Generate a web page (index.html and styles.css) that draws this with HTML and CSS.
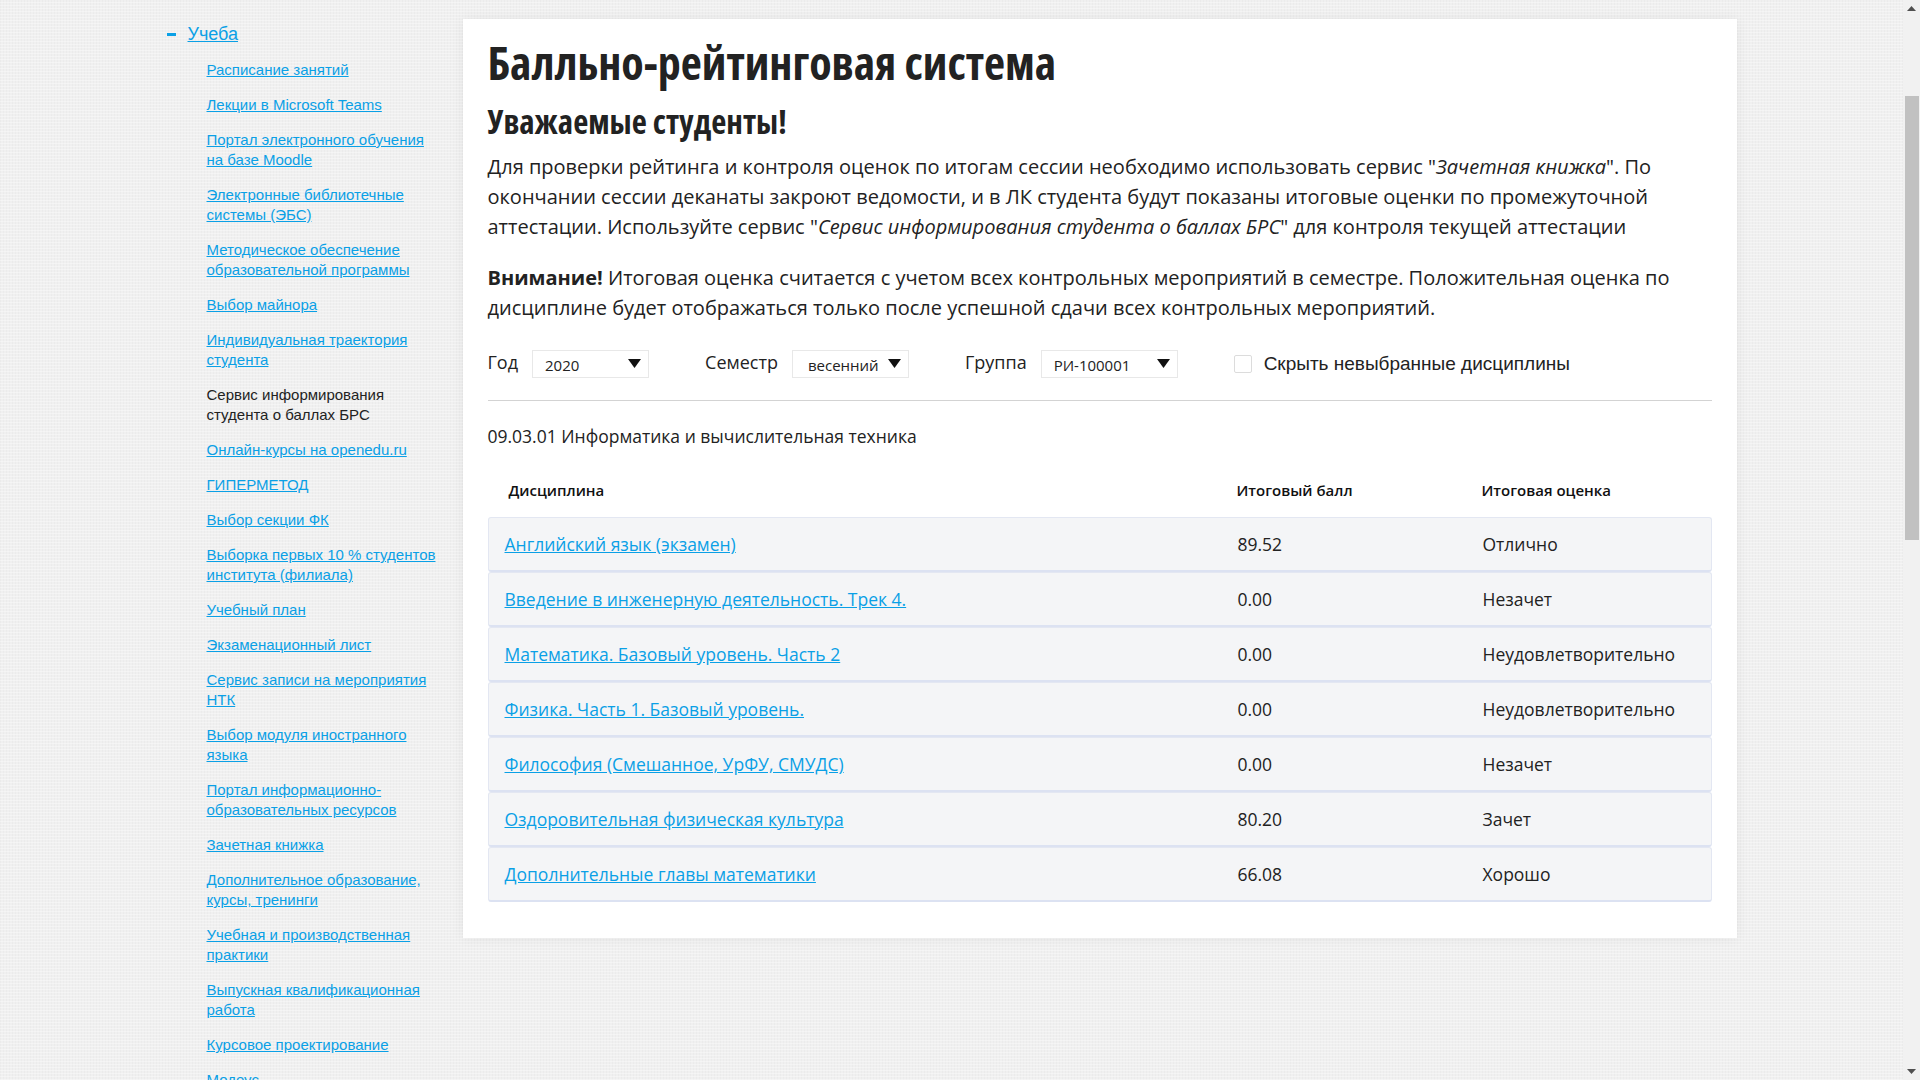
FILE: index.html
```html
<!DOCTYPE html>
<html lang="ru">
<head>
<meta charset="utf-8">
<title>Балльно-рейтинговая система</title>
<link rel="stylesheet" href="styles.css">
</head>
<body>
<div class="page">
  <div class="container">
    <aside class="sidebar">
      <div class="section">
        <span class="toggle"></span>
        <a href="#" class="section-link">Учеба</a>
      </div>
      <ul class="submenu">
        <li><a href="#">Расписание занятий</a></li>
        <li><a href="#">Лекции в Microsoft Teams</a></li>
        <li><a href="#">Портал электронного обучения на базе Moodle</a></li>
        <li><a href="#">Электронные библиотечные системы (ЭБС)</a></li>
        <li><a href="#">Методическое обеспечение образовательной программы</a></li>
        <li><a href="#">Выбор майнора</a></li>
        <li><a href="#">Индивидуальная траектория студента</a></li>
        <li><span class="current">Сервис информирования студента о баллах БРС</span></li>
        <li><a href="#">Онлайн-курсы на openedu.ru</a></li>
        <li><a href="#">ГИПЕРМЕТОД</a></li>
        <li><a href="#">Выбор секции ФК</a></li>
        <li><a href="#">Выборка первых 10 % студентов института (филиала)</a></li>
        <li><a href="#">Учебный план</a></li>
        <li><a href="#">Экзаменационный лист</a></li>
        <li><a href="#">Сервис записи на мероприятия НТК</a></li>
        <li><a href="#">Выбор модуля иностранного языка</a></li>
        <li><a href="#">Портал информационно-образовательных ресурсов</a></li>
        <li><a href="#">Зачетная книжка</a></li>
        <li><a href="#">Дополнительное образование, курсы, тренинги</a></li>
        <li><a href="#">Учебная и производственная практики</a></li>
        <li><a href="#">Выпускная квалификационная работа</a></li>
        <li><a href="#">Курсовое проектирование</a></li>
        <li><a href="#">Модеус</a></li>
      </ul>
    </aside>

    <main class="card">
      <h1 class="title">Балльно-рейтинговая система</h1>
      <h2 class="subtitle">Уважаемые студенты!</h2>
      <p class="text">Для проверки рейтинга и контроля оценок по итогам сессии необходимо использовать сервис "<em>Зачетная книжка</em>". По окончании сессии деканаты закроют ведомости, и в ЛК студента будут показаны итоговые оценки по промежуточной аттестации. Используйте сервис "<em>Сервис информирования студента о баллах БРС</em>" для контроля текущей аттестации</p>
      <p class="text text-gap"><strong>Внимание!</strong> Итоговая оценка считается с учетом всех контрольных мероприятий в семестре. Положительная оценка по дисциплине будет отображаться только после успешной сдачи всех контрольных мероприятий.</p>

      <div class="filters">
        <span class="filter-label">Год</span>
        <div class="select select-year"><span>2020</span><svg class="arrow" width="13" height="9" viewBox="0 0 13 9"><path d="M0 0H13L6.5 9Z" fill="#111"/></svg></div>
        <span class="filter-label">Семестр</span>
        <div class="select select-sem"><span>весенний</span><svg class="arrow" width="13" height="9" viewBox="0 0 13 9"><path d="M0 0H13L6.5 9Z" fill="#111"/></svg></div>
        <span class="filter-label">Группа</span>
        <div class="select select-group"><span>РИ-100001</span><svg class="arrow" width="13" height="9" viewBox="0 0 13 9"><path d="M0 0H13L6.5 9Z" fill="#111"/></svg></div>
        <label class="check"><span class="check-box"></span><span class="check-text">Скрыть невыбранные дисциплины</span></label>
      </div>

      <hr class="divider">

      <div class="program">09.03.01 Информатика и вычислительная техника</div>

      <div class="table">
        <div class="thead">
          <div class="th">Дисциплина</div>
          <div class="th">Итоговый балл</div>
          <div class="th">Итоговая оценка</div>
        </div>
        <div class="row"><a href="#" class="cell link">Английский язык (экзамен)</a><div class="cell">89.52</div><div class="cell">Отлично</div></div>
        <div class="row"><a href="#" class="cell link">Введение в инженерную деятельность. Трек 4.</a><div class="cell">0.00</div><div class="cell">Незачет</div></div>
        <div class="row"><a href="#" class="cell link">Математика. Базовый уровень. Часть 2</a><div class="cell">0.00</div><div class="cell">Неудовлетворительно</div></div>
        <div class="row"><a href="#" class="cell link">Физика. Часть 1. Базовый уровень.</a><div class="cell">0.00</div><div class="cell">Неудовлетворительно</div></div>
        <div class="row"><a href="#" class="cell link">Философия (Смешанное, УрФУ, СМУДС)</a><div class="cell">0.00</div><div class="cell">Незачет</div></div>
        <div class="row"><a href="#" class="cell link">Оздоровительная физическая культура</a><div class="cell">80.20</div><div class="cell">Зачет</div></div>
        <div class="row"><a href="#" class="cell link">Дополнительные главы математики</a><div class="cell">66.08</div><div class="cell">Хорошо</div></div>
      </div>
    </main>
  </div>
</div>

<div class="scrollbar" aria-hidden="true">
  <svg class="sb-arrow sb-up" width="9" height="5" viewBox="0 0 9 5"><path d="M0 5L4.5 0L9 5Z" fill="#505050"/></svg>
  <div class="sb-track"><div class="sb-thumb"></div></div>
  <svg class="sb-arrow sb-down" width="9" height="5" viewBox="0 0 9 5"><path d="M0 0H9L4.5 5Z" fill="#505050"/></svg>
</div>
<script src="script.js"></script>
</body>
</html>
```

FILE: styles.css
```css
html, body {
  margin: 0;
  padding: 0;
}
body {
  background-color: #f0f0f0;
  background-image:
    repeating-linear-gradient(0deg, rgba(255,255,255,0.35) 0 1px, transparent 1px 3px),
    repeating-linear-gradient(90deg, rgba(0,0,0,0.018) 0 1px, transparent 1px 3px);
  font-family: "Open Sans", "Liberation Sans", sans-serif;
  color: #222;
}
.page {
  padding-top: 211px;
  padding-right: 17px;
  min-height: 2544px;
  box-sizing: border-box;
}
.container {
  width: 1570px;
  margin: 0 auto;
  display: flex;
  align-items: flex-start;
  gap: 16px;
}

/* sidebar */
.sidebar {
  width: 280px;
  flex: none;
  padding-top: 3px;
  font-family: "Liberation Sans", Arial, sans-serif;
}
.section {
  display: flex;
  align-items: center;
  height: 24px;
}
.toggle {
  width: 9px;
  height: 3px;
  background: #0aa0e6;
  margin-right: 12px;
}
.section-link {
  font-size: 18px;
  color: #0aa0e6;
  text-decoration: underline;
}
.submenu {
  list-style: none;
  margin: 14px 0 0;
  padding: 0 0 0 40px;
  width: 234px;
  display: flex;
  flex-direction: column;
  gap: 15px;
}
.submenu li {
  font-size: 15px;
  line-height: 20px;
}
.submenu a {
  color: #0aa0e6;
  text-decoration: underline;
}
.submenu .current {
  color: #222;
}

/* card */
.card {
  flex: 1;
  background: #fff;
  box-shadow: 0 0 12px rgba(0,0,0,0.06);
  padding: 16px 25px 36px;
}
.title {
  margin: 0;
  font-size: 46px;
  line-height: 1.2;
  font-weight: 700;
  font-stretch: 75%;
  color: #222;
}
.subtitle {
  margin: 12px 0 0;
  font-size: 33px;
  line-height: 1.2;
  font-weight: 700;
  font-stretch: 75%;
  color: #222;
}
.text {
  margin: 10px 0 0;
  font-size: 20px;
  line-height: 30px;
  color: #222;
}
.text-gap {
  margin-top: 21px;
}
.text strong {
  font-weight: 700;
}

/* filters */
.filters {
  display: flex;
  align-items: center;
  margin-top: 27px;
  height: 28px;
}
.filter-label {
  font-size: 18px;
  margin-right: 14px;
  position: relative;
  top: -2px;
}
.select {
  height: 28px;
  box-sizing: border-box;
  border: 1px solid #e8e8e8;
  background: #fff;
  display: flex;
  align-items: center;
  justify-content: space-between;
  padding: 0 7px 0 12px;
  font-size: 15px;
  margin-right: 56px;
}
.select span {
  position: relative;
  top: 1px;
}
.select-year { width: 117px; }
.select-sem { width: 117px; padding-left: 15px; }
.select-group { width: 137px; }
.arrow {
  display: block;
  flex: none;
}
.check {
  display: flex;
  align-items: center;
  gap: 12px;
}
.check-box {
  width: 18px;
  height: 18px;
  box-sizing: border-box;
  border: 1px solid #dcdcdc;
  border-radius: 2px;
  background: #fff;
}
.check-text {
  font-family: "Liberation Sans", Arial, sans-serif;
  font-size: 19px;
  color: #222;
}

.divider {
  margin: 22px 0 0;
  border: 0;
  border-top: 1px solid #d3d3d3;
}
.program {
  margin-top: 22px;
  font-size: 17.5px;
  line-height: 27px;
  color: #222;
}

/* table */
.table {
  margin-top: 29px;
}
.thead, .row {
  display: grid;
  grid-template-columns: 733px 245px 1fr;
}
.thead {
  margin-bottom: 16px;
}
.th {
  font-size: 15px;
  line-height: 22px;
  font-weight: 600;
  color: #111;
  padding-left: 16px;
}
.th:first-child {
  padding-left: 21px;
}
.row {
  height: 55px;
  box-sizing: border-box;
  background: #f4f5f7;
  border: 1px solid #e3e7f2;
  border-bottom: 2px solid #dce2f2;
  border-radius: 3px;
  align-items: center;
}
.cell {
  font-size: 17.5px;
  color: #222;
  padding-left: 16px;
}
.cell.link {
  color: #0aa0e6;
  text-decoration: underline;
  justify-self: start;
}

/* fake classic scrollbar (the page is shown scrolled) */
.scrollbar {
  position: fixed;
  top: 0;
  right: 0;
  width: 17px;
  height: 100vh;
  background: #f1f1f1;
  display: flex;
  flex-direction: column;
  align-items: center;
}
.sb-arrow {
  flex: none;
  margin: 6px 0;
}
.sb-track {
  flex: 1;
  width: 100%;
  padding: 79px 0 0;
  box-sizing: border-box;
}
.sb-thumb {
  height: 444px;
  margin: 0 1px 0 2px;
  background: #c1c1c1;
}
```

FILE: script.js
```js
window.scrollTo(0, 192);
window.addEventListener('load', function () { window.scrollTo(0, 192); });
```
